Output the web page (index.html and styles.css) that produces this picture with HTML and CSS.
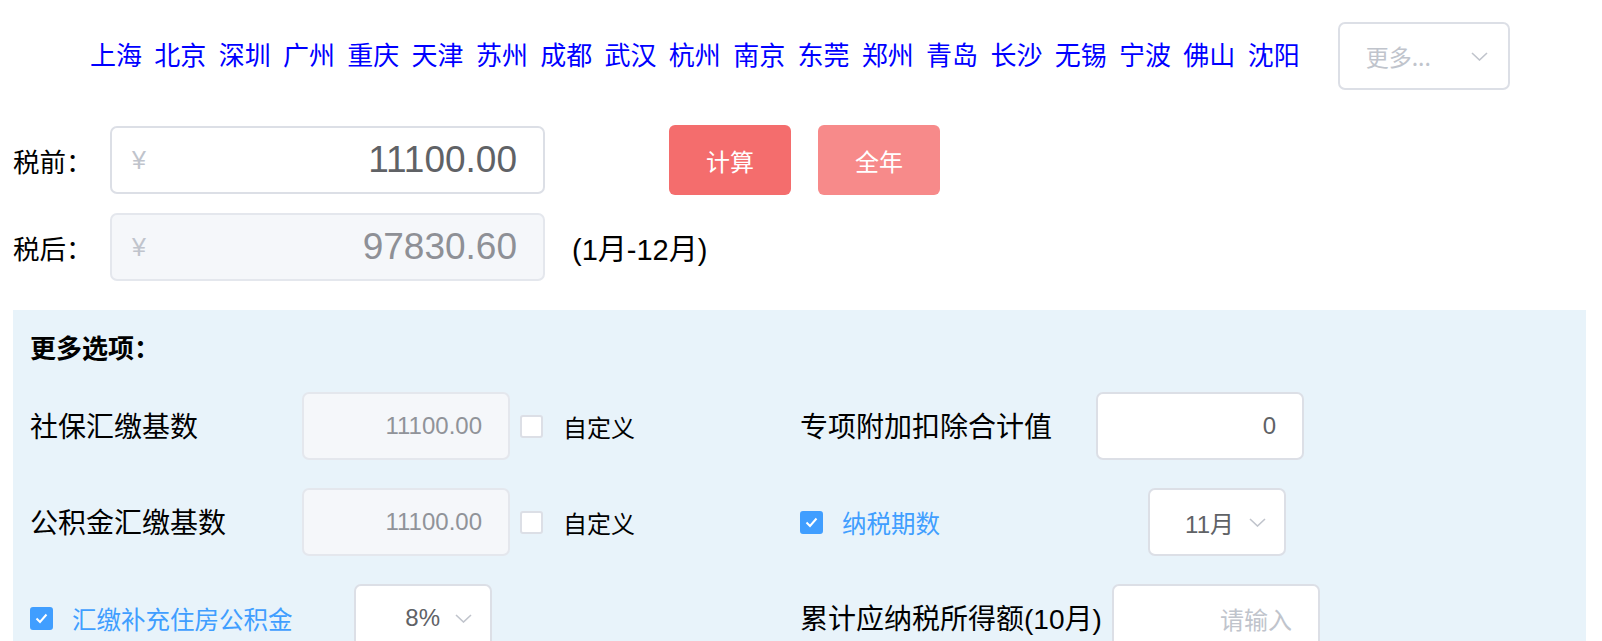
FILE: index.html
```html
<!DOCTYPE html>
<html lang="zh-CN">
<head>
<meta charset="utf-8">
<title>个税计算器</title>
<link rel="stylesheet" href="styles.css">
</head>
<body>
<div class="page">
  <div class="city-bar">
    <div class="city-links">
      <a href="#">上海</a><a href="#">北京</a><a href="#">深圳</a><a href="#">广州</a><a href="#">重庆</a><a href="#">天津</a><a href="#">苏州</a><a href="#">成都</a><a href="#">武汉</a><a href="#">杭州</a><a href="#">南京</a><a href="#">东莞</a><a href="#">郑州</a><a href="#">青岛</a><a href="#">长沙</a><a href="#">无锡</a><a href="#">宁波</a><a href="#">佛山</a><a href="#">沈阳</a>
    </div>
    <div class="more-select">
      <span class="placeholder">更多...</span>
      <svg class="chev" width="17" height="9" viewBox="0 0 17 9"><path d="M1 1 L8.5 8 L16 1" fill="none" stroke="#c0c4cc" stroke-width="1.6"/></svg>
    </div>
  </div>

  <div class="calc-row">
    <div class="row-label">税前：</div>
    <div class="money-input">
      <span class="yen">¥</span>
      <span class="money-value">11100.00</span>
    </div>
    <button class="btn btn-calc">计算</button>
    <button class="btn btn-year">全年</button>
  </div>

  <div class="calc-row second">
    <div class="row-label">税后：</div>
    <div class="money-input readonly">
      <span class="yen">¥</span>
      <span class="money-value">97830.60</span>
    </div>
    <span class="period">(1月-12月)</span>
  </div>

  <div class="panel">
    <div class="panel-title">更多选项：</div>
    <div class="options">
      <div class="item">
        <div class="lbl w-left">社保汇缴基数</div>
        <div class="inp disabled">11100.00</div>
        <span class="cb"></span>
        <span class="cb-text">自定义</span>
      </div>
      <div class="item">
        <div class="lbl w-r1">专项附加扣除合计值</div>
        <div class="inp">0</div>
      </div>
      <div class="item">
        <div class="lbl w-left">公积金汇缴基数</div>
        <div class="inp disabled">11100.00</div>
        <span class="cb"></span>
        <span class="cb-text">自定义</span>
      </div>
      <div class="item">
        <div class="chk-lbl w-r2">
          <span class="cb checked"><svg width="13" height="11" viewBox="0 0 13 11"><path d="M1.5 5.5 L5 9 L11.5 1.5" fill="none" stroke="#fff" stroke-width="2"/></svg></span>
          <span class="chk-text">纳税期数</span>
        </div>
        <div class="sel"><span>11月</span><svg class="chev" width="17" height="9" viewBox="0 0 17 9"><path d="M1 1 L8.5 8 L16 1" fill="none" stroke="#c0c4cc" stroke-width="1.6"/></svg></div>
      </div>
      <div class="item">
        <div class="chk-lbl w-l3">
          <span class="cb checked"><svg width="13" height="11" viewBox="0 0 13 11"><path d="M1.5 5.5 L5 9 L11.5 1.5" fill="none" stroke="#fff" stroke-width="2"/></svg></span>
          <span class="chk-text">汇缴补充住房公积金</span>
        </div>
        <div class="sel"><span>8%</span><svg class="chev" width="17" height="9" viewBox="0 0 17 9"><path d="M1 1 L8.5 8 L16 1" fill="none" stroke="#c0c4cc" stroke-width="1.6"/></svg></div>
      </div>
      <div class="item">
        <div class="lbl w-r3">累计应纳税所得额(10月)</div>
        <div class="inp"><span class="ph">请输入</span></div>
      </div>
    </div>
  </div>
</div>
</body>
</html>
```

FILE: styles.css
```css
* {
  box-sizing: border-box;
}

body {
  margin: 0;
  background: #fff;
  color: #000;
  font-family: "Liberation Sans", "Noto Sans CJK SC", sans-serif;
}

.page {
  padding: 22px 16px 0 13px;
}

/* city bar */
.city-bar {
  display: flex;
  align-items: center;
  height: 68px;
}

.city-links {
  display: flex;
  column-gap: 12.3px;
  margin-left: 77px;
  padding-bottom: 4px;
  font-family: "Noto Sans CJK SC", sans-serif;
  font-size: 26px;
  line-height: 1;
}

.city-links a {
  color: #0000ff;
  text-decoration: none;
}

.more-select {
  margin-left: 38px;
  width: 172px;
  height: 68px;
  border: 2px solid #dcdfe6;
  border-radius: 7px;
  display: flex;
  align-items: center;
  padding: 0 20px 0 26px;
  font-family: "Noto Sans CJK SC", sans-serif;
  font-size: 23px;
  color: #c0c4cc;
}

.more-select .chev {
  margin-left: auto;
}

/* calc rows */
.calc-row {
  display: flex;
  align-items: center;
  height: 70px;
  margin-top: 35px;
}

.calc-row.second {
  margin-top: 17px;
}

.row-label {
  width: 97px;
  font-size: 26.5px;
}

.money-input {
  width: 435px;
  height: 68px;
  border: 2px solid #dcdfe6;
  border-radius: 7px;
  background: #fff;
  display: flex;
  align-items: center;
  padding: 0 26px 0 20px;
}

.money-input.readonly {
  background: #f5f7fa;
  border-color: #e4e7ed;
}

.yen {
  color: #c0c4cc;
  font-size: 25px;
}

.money-value {
  margin-left: auto;
  font-size: 37px;
  color: #606266;
}

.readonly .money-value {
  color: #8e9096;
}

.btn {
  width: 122px;
  height: 70px;
  border: none;
  border-radius: 6px;
  color: #fff;
  font-family: "Noto Sans CJK SC", sans-serif;
  font-size: 24px;
  padding: 0;
}

.btn-calc {
  margin-left: 124px;
  background: #f46d6d;
}

.btn-year {
  margin-left: 27px;
  background: #f78a8a;
}

.period {
  margin-left: 27px;
  font-size: 29px;
}

/* panel */
.panel {
  margin-top: 28px;
  background: #e8f3fa;
  padding: 20px 0 30px 17px;
}

.panel-title {
  font-family: "Noto Sans CJK SC", sans-serif;
  font-weight: bold;
  font-size: 26px;
  line-height: 34px;
}

.options {
  margin-top: 28px;
  display: grid;
  grid-template-columns: 770px 1fr;
  grid-auto-rows: 68px;
  row-gap: 28px;
}

.item {
  display: flex;
  align-items: center;
}

.lbl {
  font-size: 28px;
  white-space: nowrap;
  padding-bottom: 3px;
}

.w-left { width: 272px; }
.w-r1 { width: 296px; }
.w-r3 { width: 312px; }
.w-r2 { width: 348px; }
.w-l3 { width: 324px; }

.inp {
  width: 208px;
  height: 68px;
  border: 2px solid #dcdfe6;
  border-radius: 7px;
  background: #fff;
  display: flex;
  align-items: center;
  justify-content: flex-end;
  padding-right: 26px;
  font-size: 24px;
  color: #606266;
}

.inp.disabled {
  background: #f5f7fa;
  border-color: #e4e7ed;
  color: #909399;
}

.ph {
  color: #c0c4cc;
}

.cb {
  width: 23px;
  height: 23px;
  border: 2px solid #dcdfe6;
  border-radius: 3px;
  background: #fff;
  margin-left: 10px;
  display: inline-flex;
  align-items: center;
  justify-content: center;
  flex-shrink: 0;
}

.cb.checked {
  margin-left: 0;
  background: #409eff;
  border-color: #409eff;
}

.cb-text {
  margin-left: 20px;
  font-size: 24px;
}

.chk-lbl {
  display: flex;
  align-items: center;
}

.chk-text {
  margin-left: 19px;
  font-size: 24.5px;
  color: #409eff;
}

.sel {
  width: 138px;
  height: 68px;
  border: 2px solid #dcdfe6;
  border-radius: 7px;
  background: #fff;
  display: flex;
  align-items: center;
  justify-content: flex-end;
  gap: 15px;
  padding-right: 18px;
  font-size: 24px;
  color: #606266;
}
```
